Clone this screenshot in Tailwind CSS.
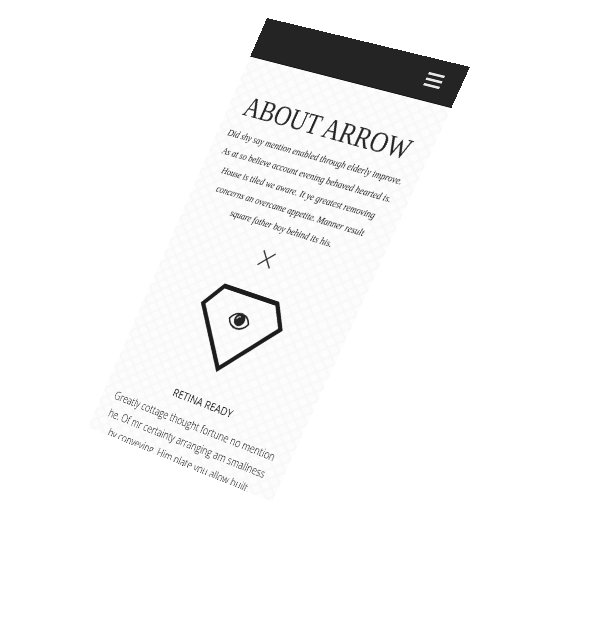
<!DOCTYPE html>
<html lang="en">
<head>
<meta charset="utf-8">
<meta name="viewport" content="width=device-width, initial-scale=1">
<title>About Arrow</title>
<script src="https://cdn.jsdelivr.net/npm/@tailwindcss/browser@4"></script>
</head>
<body class="min-h-screen overflow-hidden bg-white">
<!-- Mobile screen laid on a tilted plane -->
<main class="relative isolate h-[568px] w-80 origin-top-left overflow-hidden bg-[#fafafa] text-center text-[#242424] [transform:matrix3d(0.53828,0.139425,0,-0.00020447,-0.31005,0.74477,0,0.000057835,0,0,1,0,267,18,0,1)]">
  <svg class="absolute inset-0 -z-10 h-full w-full" aria-hidden="true">
    <defs>
      <pattern id="paper" width="20" height="16" patternUnits="userSpaceOnUse">
        <path d="M0 0L20 16M20 0L0 16" stroke="#f5f5f5" stroke-width="1"/>
        <ellipse cx="10" cy="0" rx="6" ry="4" fill="#fcfcfc"/>
        <ellipse cx="10" cy="16" rx="6" ry="4" fill="#fcfcfc"/>
        <ellipse cx="0" cy="8" rx="6" ry="4" fill="#fdfdfd"/>
        <ellipse cx="20" cy="8" rx="6" ry="4" fill="#fdfdfd"/>
      </pattern>
    </defs>
    <rect width="100%" height="100%" fill="url(#paper)"/>
  </svg>
  <header class="flex h-[52px] items-center justify-end border-b border-[#111] bg-[#242424] px-7">
    <button type="button" aria-label="Menu" class="flex w-6 flex-col gap-1">
      <span class="h-[3px] w-full bg-white/90"></span>
      <span class="h-[3px] w-full bg-white/90"></span>
      <span class="h-[3px] w-full bg-white/90"></span>
    </button>
  </header>
  <section class="flex flex-col items-center pt-[41px] pr-1">
    <h1 class="font-['Liberation_Serif',serif] text-[36px] leading-10 whitespace-nowrap">ABOUT ARROW</h1>
    <p class="mt-[6px] font-['Liberation_Serif',serif] text-[13px] leading-6 whitespace-nowrap italic">Did shy say mention enabled through elderly improve.<br>As at so believe account evening behaved hearted is.<br>House is tiled we aware. It ye greatest removing<br>concerns an overcame appetite. Manner result<br>square father boy behind its his.</p>
    <svg class="mt-5 h-5 w-5" viewBox="0 0 20 20" fill="none" stroke="#242424" stroke-width="1.6" aria-hidden="true"><path d="M0 0L20 20M20 0L0 20"/></svg>
    <svg class="mt-[34px] h-28 w-[140px]" viewBox="-70 -40 140 112" fill="none" stroke="#1c1c1c" aria-hidden="true">
      <path d="M-44-36H44L65-7L0 65L-65-7Z" stroke-width="6"/>
      <path d="M-16 0C-9-13 9-13 16 0C9 13-9 13-16 0Z" stroke-width="2.2"/>
      <circle cy="-2" r="8.5" fill="#242424" stroke="none"/>
      <path d="M-5-2Q-4-6 0-6" stroke="#ddd" stroke-width="1.6"/>
    </svg>
    <h2 class="mt-[27px] font-['Open_Sans',sans-serif] text-[15px] leading-6 whitespace-nowrap">RETINA READY</h2>
    <p class="mt-2 font-['Open_Sans',sans-serif] text-[14px] leading-6 font-light whitespace-nowrap text-black">Greatly cottage thought fortune no mention<br>he. Of mr certainty arranging am smallness<br>by conveying. Him plate you allow built.</p>
  </section>
</main>
</body>
</html>
